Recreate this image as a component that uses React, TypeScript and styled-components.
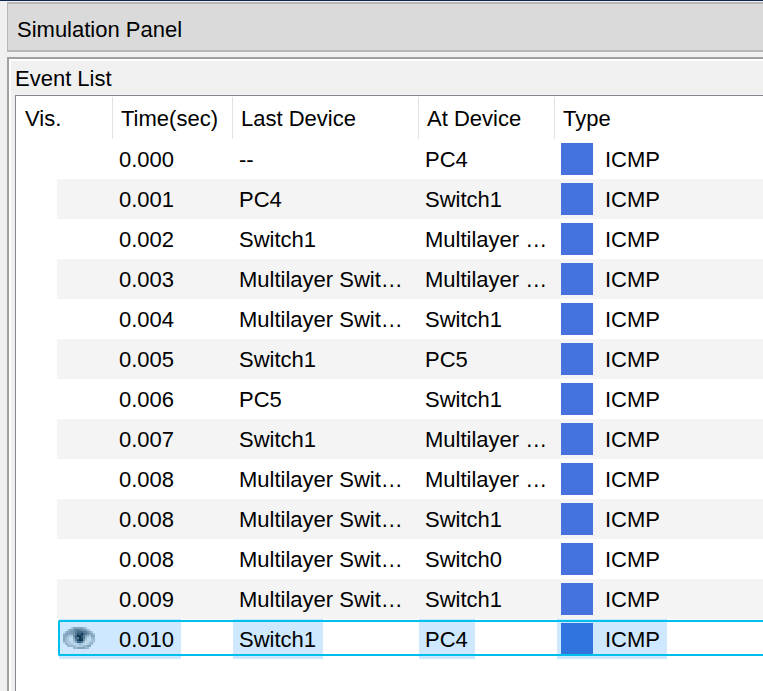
import React from "react";
import styled, { createGlobalStyle } from "styled-components";

const GlobalStyle = createGlobalStyle`
  * { box-sizing: border-box; }
  html, body { margin: 0; height: 691px; overflow: hidden; background: #f0f0f0; }
  body { font: 22px/26px "Liberation Sans", Arial, sans-serif; color: #000; }
`;

const Window = styled.main`
  width: 763px;
  height: 691px;
  overflow: hidden;
  display: flex;
  flex-direction: column;
  border-top: 1px solid #0f2450;
  padding: 1px 0 0 7px;
`;

const TitleBar = styled.header`
  flex: none;
  height: 50px;
  margin-bottom: 5px;
  padding: 13px 0 0 9px;
  background: #dadada;
  border: 2px solid #b8b6b6;
  border-left-width: 1px;
  border-right: 0;
  white-space: nowrap;
`;

const Title = styled.span`
  display: block;
`;

const Group = styled.section`
  flex: 1;
  min-height: 0;
  display: flex;
  flex-direction: column;
  border-top: 2px solid #a0a0a0;
  border-left: 2px solid #a0a0a0;
  box-shadow: inset 2px 2px 0 #fff;
  padding-left: 6px;
`;

const Legend = styled.div`
  height: 36px;
  flex: none;
  padding-top: 7px;
`;

const Table = styled.div`
  flex: 1;
  background: #fff;
  border-top: 1px solid #828790;
  border-left: 1px solid #828790;
`;

const columns = "97px 120px 186px 136px 208px";

const HeaderRow = styled.div`
  display: grid;
  grid-template-columns: ${columns};
  height: 43px;
  padding-top: 1px;
`;

const HeaderCell = styled.div`
  height: 42px;
  padding: 9px 0 0 8px;
  border-right: 1px solid #e2e2e2;
  white-space: nowrap;
  &:first-child { padding-left: 9px; }
  &:last-child { border-right: 0; }
`;

const Row = styled.div<{ $striped: boolean }>`
  position: relative;
  display: grid;
  grid-template-columns: ${columns};
  height: 40px;
  background: linear-gradient(${p => (p.$striped ? "#f4f4f4, #f4f4f4" : "#fff, #fff")}) 41px 0 no-repeat;
`;

const Cell = styled.div`
  display: flex;
  white-space: nowrap;
  min-width: 0;
`;

const Value = styled.span<{ $selected: boolean; $width?: number }>`
  height: 40px;
  padding: 8px 0 0 6px;
  width: ${p => (p.$width ? `${p.$width}px` : "auto")};
  background: ${p => (p.$selected ? "#cde8ff" : "transparent")};
`;

const VisCell = styled(Cell)<{ $selected: boolean }>`
  margin-left: 43px;
  padding: 8px 0 0 4px;
  background: ${p => (p.$selected ? "#cde8ff" : "transparent")};
`;

const TypeValue = styled.span<{ $selected: boolean }>`
  display: flex;
  gap: 12px;
  width: 110px;
  height: 40px;
  margin-left: 2px;
  padding: 8px 0 0 4px;
  background: ${p => (p.$selected ? "#cde8ff" : "transparent")};
`;

const Swatch = styled.span<{ $selected: boolean }>`
  flex: none;
  width: 32px;
  height: 32px;
  margin-top: -4px;
  background: ${p => (p.$selected ? "#2f74df" : "#4672e0")};
`;

const FocusFrame = styled.div`
  position: absolute;
  top: 1px;
  left: 42px;
  right: 0;
  height: 36px;
  border: 2px solid #00bfec;
  border-right: 0;
  border-radius: 2px 0 0 2px;
`;

const EyeSvg = styled.svg`
  display: block;
  flex: none;
  width: 32px;
  height: 22px;
`;

const eyeShades = [
  "....24444432....",
  "..244566655431..",
  ".34455677766542.",
  "3444456879765442",
  "4432257998643244",
  "4321147698631133",
  "4321136899521123",
  "3322124776311232",
  ".33221123211233.",
  "..333321223344..",
  ".....33444433...",
];
const palette = ["#cde8ff", "#bcd9ee", "#abc9df", "#98b8d0", "#83a5bf", "#7093ae", "#587d9b", "#416887", "#28516f", "#103650"];

const EyeIcon = () => (
  <EyeSvg viewBox="0 0 16 11" shapeRendering="crispEdges" aria-label="Visible">
    {eyeShades.flatMap((line, y) =>
      [...line].map((shade, x) =>
        shade === "." ? null : <rect key={`${x}-${y}`} x={x} y={y} width="1" height="1" fill={palette[Number(shade)]} />
      )
    )}
  </EyeSvg>
);

const SWITCH_CUT = "Multilayer Swit…";
const MULTI_CUT = "Multilayer …";
const events = [
  ["0.000", "--", "PC4"],
  ["0.001", "PC4", "Switch1"],
  ["0.002", "Switch1", MULTI_CUT],
  ["0.003", SWITCH_CUT, MULTI_CUT],
  ["0.004", SWITCH_CUT, "Switch1"],
  ["0.005", "Switch1", "PC5"],
  ["0.006", "PC5", "Switch1"],
  ["0.007", "Switch1", MULTI_CUT],
  ["0.008", SWITCH_CUT, MULTI_CUT],
  ["0.008", SWITCH_CUT, "Switch1"],
  ["0.008", SWITCH_CUT, "Switch0"],
  ["0.009", SWITCH_CUT, "Switch1"],
  ["0.010", "Switch1", "PC4"],
];

export default function App() {
  return (
    <>
      <GlobalStyle />
      <Window>
        <TitleBar><Title>Simulation Panel</Title></TitleBar>
        <Group>
          <Legend>Event List</Legend>
          <Table>
            <HeaderRow>
              {["Vis.", "Time(sec)", "Last Device", "At Device", "Type"].map(h => <HeaderCell key={h}>{h}</HeaderCell>)}
            </HeaderRow>
            {events.map(([time, last, at], i) => {
              const selected = i === events.length - 1;
              return (
                <Row key={i} $striped={i % 2 === 1}>
                  <VisCell $selected={selected}>{selected && <EyeIcon />}</VisCell>
                  <Cell><Value $selected={selected} $width={68}>{time}</Value></Cell>
                  <Cell><Value $selected={selected} $width={selected ? 90 : undefined}>{last}</Value></Cell>
                  <Cell><Value $selected={selected} $width={selected ? 56 : undefined}>{at}</Value></Cell>
                  <Cell><TypeValue $selected={selected}><Swatch $selected={selected} />ICMP</TypeValue></Cell>
                  {selected && <FocusFrame />}
                </Row>
              );
            })}
          </Table>
        </Group>
      </Window>
    </>
  );
}
